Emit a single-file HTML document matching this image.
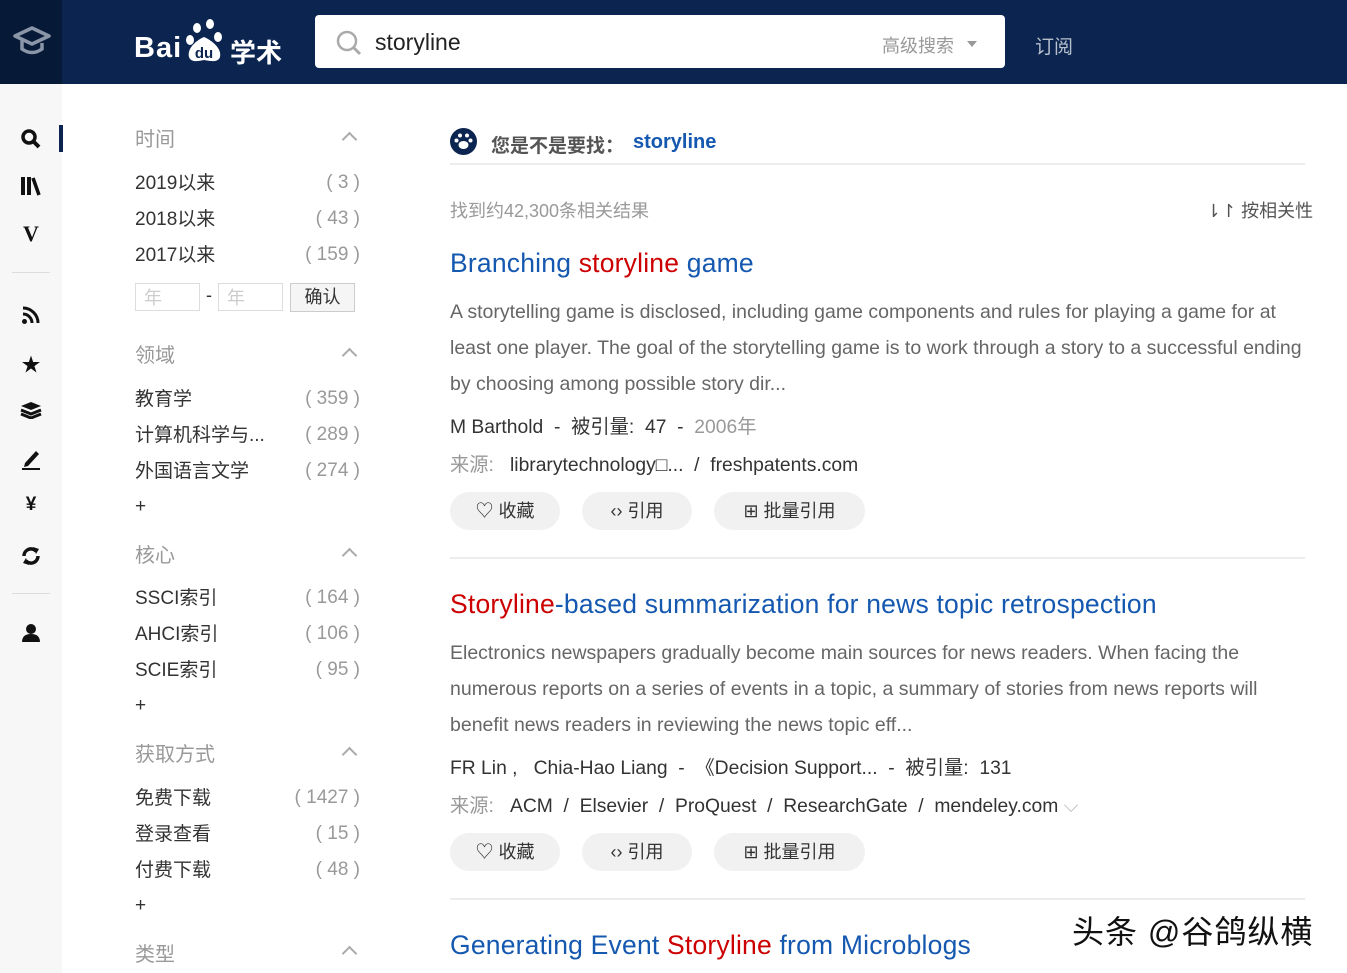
<!DOCTYPE html>
<html><head><meta charset="utf-8"><style>
*{margin:0;padding:0;box-sizing:border-box}
body{width:1347px;height:973px;overflow:hidden;background:#fff;font-family:"Liberation Sans","Noto Sans CJK SC",sans-serif;position:relative;color:#333}
.a{position:absolute;white-space:nowrap}
.top{left:0;top:0;width:1347px;height:84px;background:#0b2550}
.corner{left:0;top:0;width:62px;height:84px;background:#061a38}
.side{left:0;top:84px;width:62px;height:889px;background:#f7f7f7}
.fl{font-size:19px;color:#333;line-height:24px}
.lab{font-size:20px;color:#999}
.cnt{font-size:19px;color:#999;text-align:right;width:80px;left:280px}
.chev{left:344px;width:11px;height:11px;border-left:2px solid #aaa;border-top:2px solid #aaa;transform:rotate(45deg)}
.t{font-size:26.5px;color:#1558b0;letter-spacing:0.2px}
.t em{font-style:normal;color:#c00}
.sn{font-size:19.5px;color:#666;line-height:36px;width:860px;white-space:normal;left:450px}
.m{font-size:19.3px;color:#333}
.btn{height:38px;border-radius:19px;background:#f1f1f1;font-size:18px;color:#333;line-height:38px;text-align:center}
.hr{height:2px;background:#ececec;left:450px;width:855px}
.si{left:20px;width:22px;text-align:center;font-size:19px;color:#111;font-weight:bold}
</style></head><body>
<div class="a top"></div><div class="a corner"></div>
<svg class="a" style="left:12px;top:24px" width="40" height="36" viewBox="0 0 40 36"><path d="M3 12 L20 4 L37 12 L20 20 Z" fill="none" stroke="#8a96a8" stroke-width="3.5" stroke-linejoin="round"/><path d="M10 16 V25 Q20 32 30 25 V19" fill="none" stroke="#8a96a8" stroke-width="3.5"/></svg>
<div class="a" style="left:134px;top:32px;font-size:29px;font-weight:bold;color:#fff;letter-spacing:1px">Bai</div>
<svg class="a" style="left:183px;top:17px" width="46" height="48" viewBox="0 0 46 48"><ellipse cx="14" cy="11" rx="4" ry="5" fill="#fff"/><ellipse cx="27" cy="7" rx="4" ry="5" fill="#fff"/><ellipse cx="7" cy="23" rx="4" ry="5" fill="#fff"/><ellipse cx="35" cy="20" rx="4" ry="5" fill="#fff"/><path d="M21 20 C12 24 4 32 6 40 C8 46 16 44 21 43 C27 44 35 46 37 40 C39 32 30 24 21 20Z" fill="#fff"/><text x="21" y="41" font-size="15" font-weight="bold" fill="#0b2550" text-anchor="middle" font-family="Liberation Sans">du</text></svg>
<div class="a" style="left:230px;top:33px;font-size:26px;font-weight:bold;color:#fff">学术</div>
<div class="a" style="left:315px;top:15px;width:690px;height:53px;background:#fff;border-radius:4px"></div>
<svg class="a" style="left:335px;top:29px" width="28" height="28" viewBox="0 0 28 28"><circle cx="12" cy="12" r="9" fill="none" stroke="#aaa" stroke-width="2.5"/><path d="M19 19 L25 25" stroke="#aaa" stroke-width="3"/></svg>
<div class="a" style="left:375px;top:29px;font-size:23px;color:#222">storyline</div>
<div class="a" style="left:882px;top:32px;font-size:18px;color:#999">高级搜索</div>
<div class="a" style="left:967px;top:41px;border:5px solid transparent;border-top:6px solid #999"></div>
<div class="a" style="left:1035px;top:32px;font-size:19px;color:#b8c0cc">订阅</div>

<div class="a side"></div>
<div class="a" style="left:59px;top:125px;width:4px;height:27px;background:#0b2550"></div>
<svg class="a" style="left:20px;top:128px" width="22" height="22" viewBox="0 0 22 22"><circle cx="9" cy="9" r="6" fill="none" stroke="#111" stroke-width="3.5"/><path d="M13 13 L19 19" stroke="#111" stroke-width="4"/></svg>
<svg class="a" style="left:20px;top:176px" width="22" height="20" viewBox="0 0 22 20"><rect x="1" y="1" width="4" height="18" fill="#111"/><rect x="7" y="1" width="4" height="18" fill="#111"/><path d="M13 2 L19 19" stroke="#111" stroke-width="3.5"/></svg>
<div class="a si" style="top:221px;font-size:22px;font-family:'Liberation Serif',serif">V</div>
<div class="a" style="left:12px;top:272px;width:38px;height:1px;background:#ddd"></div>
<svg class="a" style="left:21px;top:305px" width="20" height="20" viewBox="0 0 20 20"><circle cx="3.5" cy="16.5" r="2.5" fill="#111"/><path d="M2 9 A9 9 0 0 1 11 18" fill="none" stroke="#111" stroke-width="3"/><path d="M2 3 A15 15 0 0 1 17 18" fill="none" stroke="#111" stroke-width="3"/></svg>
<div class="a si" style="top:350px">★</div>
<svg class="a" style="left:20px;top:401px" width="22" height="18" viewBox="0 0 22 18"><path d="M11 1 L21 5 L11 9 L1 5Z" fill="#111"/><path d="M1 9 L11 13 L21 9" fill="none" stroke="#111" stroke-width="3"/><path d="M1 13 L11 17 L21 13" fill="none" stroke="#111" stroke-width="3"/></svg>
<svg class="a" style="left:21px;top:448px" width="20" height="22" viewBox="0 0 20 22"><path d="M4 15 L15 3 L18 6 L7 18 L3 19Z" fill="#111"/><rect x="1" y="20" width="18" height="2" fill="#111"/></svg>
<div class="a si" style="top:494px">¥</div>
<svg class="a" style="left:20px;top:545px" width="22" height="22" viewBox="0 0 22 22"><path d="M4 11 A7 7 0 0 1 16 6" fill="none" stroke="#111" stroke-width="3.5"/><path d="M18 11 A7 7 0 0 1 6 16" fill="none" stroke="#111" stroke-width="3.5"/><path d="M13 2 L19 4 L16 9Z" fill="#111"/><path d="M9 20 L3 18 L6 13Z" fill="#111"/></svg>
<div class="a" style="left:12px;top:593px;width:38px;height:1px;background:#ddd"></div>
<svg class="a" style="left:21px;top:623px" width="20" height="20" viewBox="0 0 20 20"><circle cx="10" cy="6" r="5" fill="#111"/><path d="M1 19 Q1 11 10 11 Q19 11 19 19Z" fill="#111"/></svg>

<div class="a lab" style="left:135px;top:123px">时间</div><div class="a chev" style="top:134px"></div>
<div class="a fl" style="left:135px;top:172px">2019以来</div><div class="a cnt" style="top:172px">( 3 )</div>
<div class="a fl" style="left:135px;top:208px">2018以来</div><div class="a cnt" style="top:208px">( 43 )</div>
<div class="a fl" style="left:135px;top:244px">2017以来</div><div class="a cnt" style="top:244px">( 159 )</div>
<div class="a" style="left:135px;top:283px;width:65px;height:28px;border:1px solid #ddd;color:#ccc;font-size:18px;padding-left:8px">年</div>
<div class="a" style="left:206px;top:285px;color:#333;font-size:18px">-</div>
<div class="a" style="left:218px;top:283px;width:65px;height:28px;border:1px solid #ddd;color:#ccc;font-size:18px;padding-left:8px">年</div>
<div class="a" style="left:290px;top:283px;width:65px;height:29px;border:1px solid #ccc;background:#f5f5f5;font-size:18px;text-align:center;line-height:27px">确认</div>
<div class="a lab" style="left:135px;top:339px">领域</div><div class="a chev" style="top:350px"></div>
<div class="a fl" style="left:135px;top:388px">教育学</div><div class="a cnt" style="top:388px">( 359 )</div>
<div class="a fl" style="left:135px;top:424px">计算机科学与...</div><div class="a cnt" style="top:424px">( 289 )</div>
<div class="a fl" style="left:135px;top:460px">外国语言文学</div><div class="a cnt" style="top:460px">( 274 )</div>
<div class="a fl" style="left:135px;top:495px">+</div>
<div class="a lab" style="left:135px;top:539px">核心</div><div class="a chev" style="top:550px"></div>
<div class="a fl" style="left:135px;top:587px">SSCI索引</div><div class="a cnt" style="top:587px">( 164 )</div>
<div class="a fl" style="left:135px;top:623px">AHCI索引</div><div class="a cnt" style="top:623px">( 106 )</div>
<div class="a fl" style="left:135px;top:659px">SCIE索引</div><div class="a cnt" style="top:659px">( 95 )</div>
<div class="a fl" style="left:135px;top:694px">+</div>
<div class="a lab" style="left:135px;top:738px">获取方式</div><div class="a chev" style="top:749px"></div>
<div class="a fl" style="left:135px;top:787px">免费下载</div><div class="a cnt" style="top:787px">( 1427 )</div>
<div class="a fl" style="left:135px;top:823px">登录查看</div><div class="a cnt" style="top:823px">( 15 )</div>
<div class="a fl" style="left:135px;top:859px">付费下载</div><div class="a cnt" style="top:859px">( 48 )</div>
<div class="a fl" style="left:135px;top:894px">+</div>
<div class="a lab" style="left:135px;top:938px">类型</div><div class="a chev" style="top:948px"></div>

<svg class="a" style="left:450px;top:128px" width="27" height="27" viewBox="0 0 27 27"><circle cx="13.5" cy="13.5" r="13.5" fill="#0b2550"/><circle cx="10" cy="7.5" r="2" fill="#fff"/><circle cx="17" cy="7.5" r="2" fill="#fff"/><circle cx="6.5" cy="12.5" r="2" fill="#fff"/><circle cx="20.5" cy="12.5" r="2" fill="#fff"/><ellipse cx="13.5" cy="17" rx="5" ry="4" fill="#fff"/></svg>
<div class="a" style="left:491px;top:131px;font-size:19px;font-weight:bold;color:#555">您是不是要找：</div>
<div class="a" style="left:633px;top:131px;font-size:20px;font-weight:bold;color:#1558b0">storyline</div>
<div class="a hr" style="top:163px"></div>
<div class="a" style="left:450px;top:197px;font-size:18px;color:#999">找到约42,300条相关结果</div>
<div class="a" style="left:1206px;top:197px;font-size:18px;color:#555">⇂↾ 按相关性</div>

<div class="a t" style="left:450px;top:248px">Branching <em>storyline</em> game</div>
<div class="a sn" style="top:294px">A storytelling game is disclosed, including game components and rules for playing a game for at least one player. The goal of the storytelling game is to work through a story to a successful ending by choosing among possible story dir...</div>
<div class="a m" style="left:450px;top:411px">M Barthold &nbsp;- &nbsp;被引量: &nbsp;47 &nbsp;- &nbsp;<span style="color:#999">2006年</span></div>
<div class="a m" style="left:450px;top:449px"><span style="color:#999">来源: </span>&nbsp; librarytechnology□... &nbsp;/ &nbsp;freshpatents.com</div>
<div class="a btn" style="left:450px;top:492px;width:110px">♡ 收藏</div>
<div class="a btn" style="left:582px;top:492px;width:110px">‹› 引用</div>
<div class="a btn" style="left:714px;top:492px;width:151px">⊞ 批量引用</div>
<div class="a hr" style="top:557px"></div>

<div class="a t" style="left:450px;top:589px"><em>Storyline</em>-based summarization for news topic retrospection</div>
<div class="a sn" style="top:635px">Electronics newspapers gradually become main sources for news readers. When facing the numerous reports on a series of events in a topic, a summary of stories from news reports will benefit news readers in reviewing the news topic eff...</div>
<div class="a m" style="left:450px;top:752px">FR Lin , &nbsp; Chia-Hao Liang &nbsp;- &nbsp;《Decision Support... &nbsp;- &nbsp;被引量: &nbsp;131</div>
<div class="a m" style="left:450px;top:790px"><span style="color:#999">来源: </span>&nbsp; ACM &nbsp;/ &nbsp;Elsevier &nbsp;/ &nbsp;ProQuest &nbsp;/ &nbsp;ResearchGate &nbsp;/ &nbsp;mendeley.com <span style="color:#bbb">⌵</span></div>
<div class="a btn" style="left:450px;top:833px;width:110px">♡ 收藏</div>
<div class="a btn" style="left:582px;top:833px;width:110px">‹› 引用</div>
<div class="a btn" style="left:714px;top:833px;width:151px">⊞ 批量引用</div>
<div class="a hr" style="top:898px"></div>

<div class="a t" style="left:450px;top:930px">Generating Event <em>Storyline</em> from Microblogs</div>
<div class="a" style="left:1072px;top:907px;font-size:32px;color:#111;letter-spacing:1px;text-shadow:0 0 3px #fff,0 0 3px #fff">头条 @谷鸽纵横</div>
</body></html>
